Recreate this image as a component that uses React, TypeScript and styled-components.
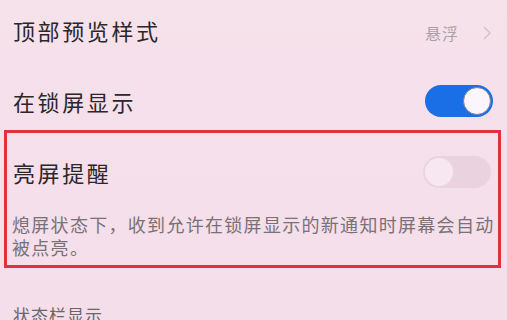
import React from "react";
import styled, { createGlobalStyle } from "styled-components";

const GlobalStyle = createGlobalStyle`
  html, body {
    margin: 0;
    padding: 0;
    background: #f5e0ea;
    font-family: "Noto Sans CJK SC", "Noto Sans", sans-serif;
  }
  #root {
    height: 320px;
    overflow: hidden;
  }
`;

const Page = styled.div`
  width: 507px;
  height: 320px;
  overflow: hidden;
  background: linear-gradient(180deg, #f6e2eb 0%, #f4dfea 60%, #f3dee9 100%);
  display: flex;
  flex-direction: column;
  & > * {
    flex-shrink: 0;
  }
`;

const Row = styled.div<{ $height: number; $top?: number }>`
  display: flex;
  align-items: center;
  justify-content: space-between;
  height: ${(p) => p.$height}px;
  margin-top: ${(p) => p.$top ?? 0}px;
  padding: 0 13px 0 13px;
`;

const Title = styled.span`
  font-size: 22px;
  letter-spacing: 2.6px;
  color: #2b2629;
  line-height: 1;
`;

const Trail = styled.div`
  display: flex;
  align-items: center;
  gap: 24px;
  margin-top: 6px;
  padding-right: 2px;
`;

const Value = styled.span`
  font-size: 16px;
  letter-spacing: 1px;
  color: #aaa1a7;
`;

const Switch = styled.div<{ $on: boolean }>`
  position: relative;
  width: 68px;
  height: 32px;
  border-radius: 16px;
  background: ${(p) => (p.$on ? "#1a6fe6" : "#ead3df")};
  margin-right: 1px;
  filter: ${(p) => (p.$on ? "none" : "blur(0.6px)")};
`;

const Knob = styled.div<{ $on: boolean }>`
  position: absolute;
  top: 2px;
  ${(p) => (p.$on ? "right: 2px;" : "left: 2px;")}
  width: 28px;
  height: 28px;
  border-radius: 50%;
  box-sizing: border-box;
  background: ${(p) => (p.$on ? "#fbf6fb" : "#f7e7f0")};
  border: ${(p) => (p.$on ? "1.5px solid #7d7f99" : "none")};
`;

const Highlight = styled.div`
  margin: 0 6px 0 4px;
  border: 3px solid #e2313c;
  padding: 0 0 6px 0;
`;

const InnerRow = styled(Row)`
  padding: 0 6px 0 6px;
`;

const Desc = styled.p`
  margin: 2px 0 0 0;
  padding: 0 0 0 5px;
  font-size: 18px;
  letter-spacing: 1.3px;
  line-height: 23px;
  color: #7a7177;
`;

const Sub = styled.span`
  font-size: 17px;
  letter-spacing: 1px;
  color: #6c6469;
  line-height: 1;
`;

function Chevron() {
  return (
    <svg width="9" height="14" viewBox="0 0 9 14">
      <path d="M1.5 1.5 L7 7 L1.5 12.5" fill="none" stroke="#d2c4cc" strokeWidth="1.6" strokeLinecap="round" strokeLinejoin="round" />
    </svg>
  );
}

function Toggle({ on }: { on: boolean }) {
  return (
    <Switch $on={on}>
      <Knob $on={on} />
    </Switch>
  );
}

export default function App() {
  return (
    <>
      <GlobalStyle />
      <Page>
        <Row $height={60}>
          <Title>顶部预览样式</Title>
          <Trail>
            <Value>悬浮</Value>
            <Chevron />
          </Trail>
        </Row>
        <Row $height={58} $top={12}>
          <Title>在锁屏显示</Title>
          <Toggle on />
        </Row>
        <Highlight>
          <InnerRow $height={78}>
            <Title>亮屏提醒</Title>
            <Toggle on={false} />
          </InnerRow>
          <Desc>熄屏状态下，收到允许在锁屏显示的新通知时屏幕会自动被点亮。</Desc>
        </Highlight>
        <Row $height={80} $top={6}>
          <Sub>状态栏显示</Sub>
        </Row>
      </Page>
    </>
  );
}
